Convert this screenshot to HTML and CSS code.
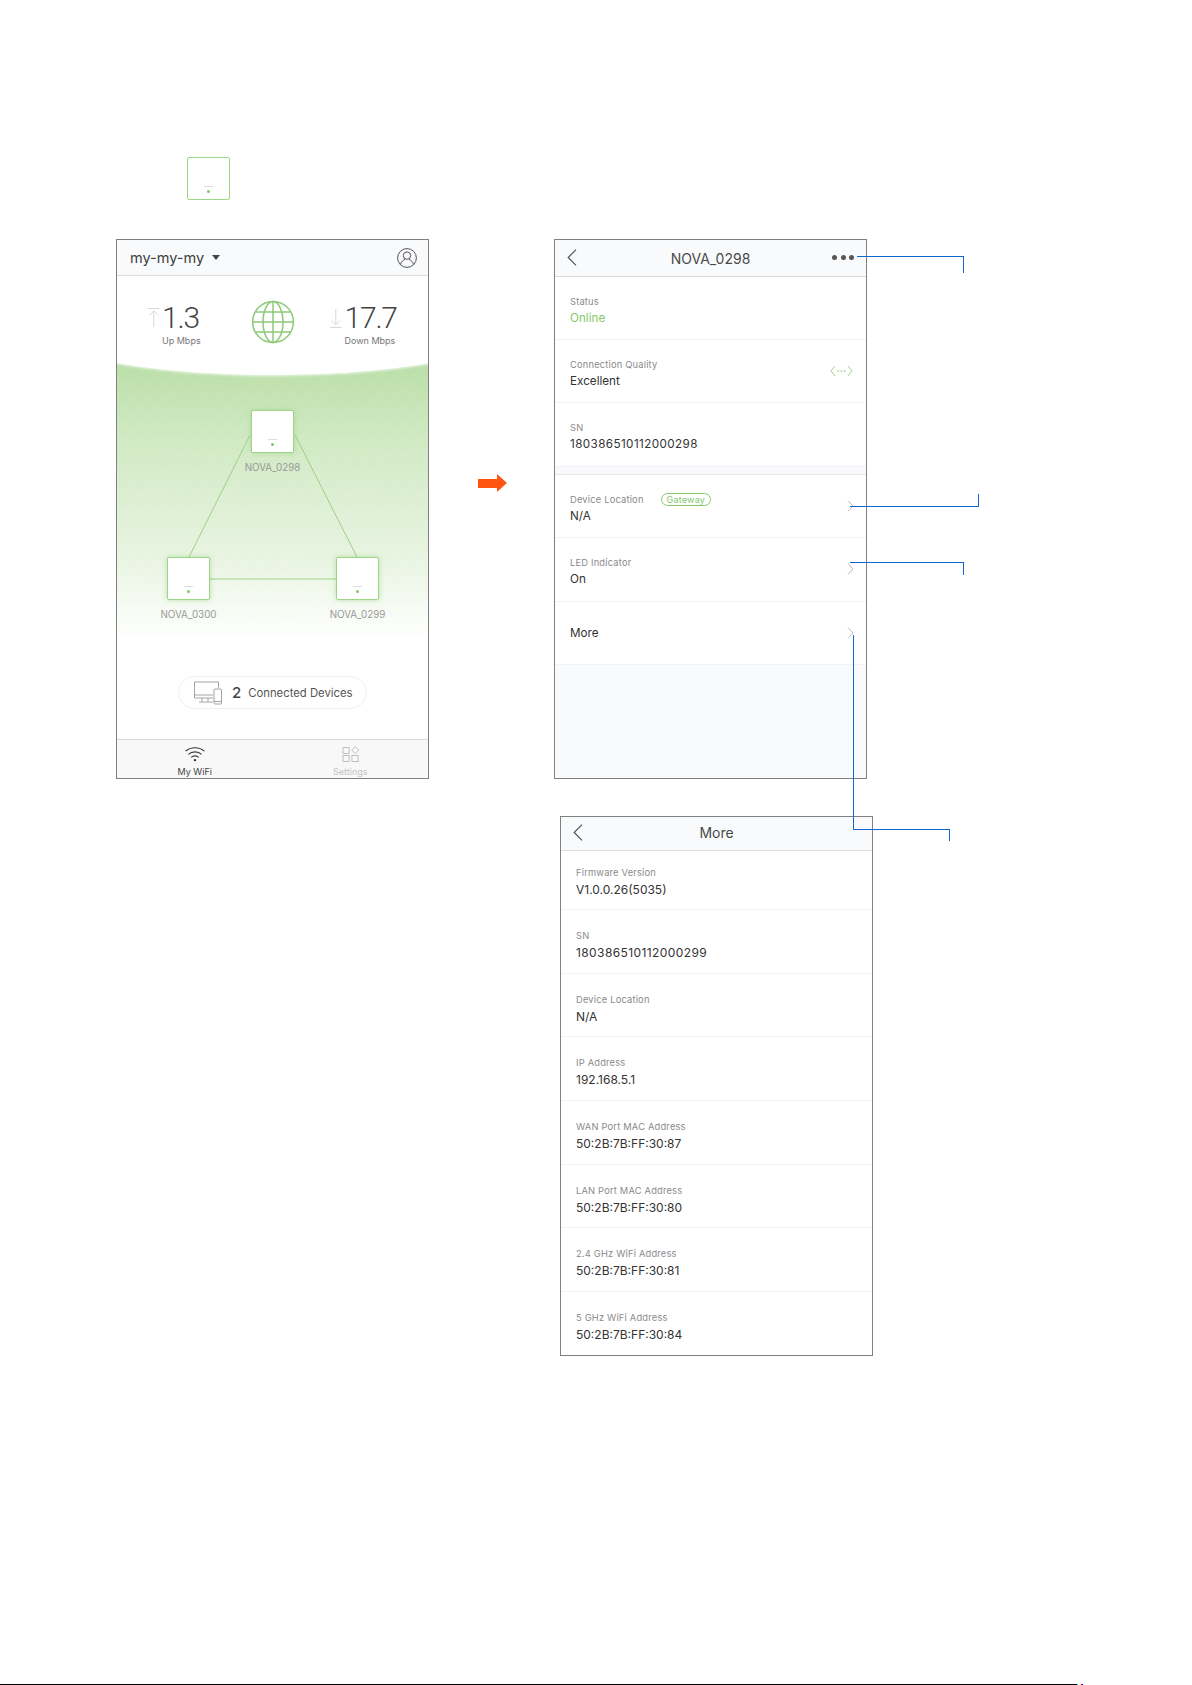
FILE: index.html
```html
<!doctype html>
<html>
<head>
  <meta charset="utf-8">
  <title>NOVA app</title>
  <link rel="stylesheet" href="styles.css">
</head>
<body>
<div class="page">

  <div class="node node-mark"><span class="node-logo"></span><span class="node-dot"></span></div>

  <div class="top-row">
    <!-- home screen -->
    <div class="phone home">
      <div class="bar home-bar">
        <span class="network">my-my-my</span>
        <span class="caret"></span>
        <svg class="user-icon" width="20" height="20" viewBox="0 0 20 20" fill="none" stroke="#444" stroke-width="0.9">
          <circle cx="10" cy="10" r="9.4"/>
          <circle cx="10" cy="7.6" r="3.7"/>
          <path d="M3.4 16.6c.7-3 3-4.6 4.6-5.2M16.6 16.6c-.7-3-3-4.6-4.6-5.2"/>
        </svg>
      </div>
      <div class="stats">
        <div class="stat stat-up">
          <svg class="stat-arrow" width="12" height="20" viewBox="0 0 12 20" fill="none" stroke="#d4d4d4" stroke-width="0.9">
            <path d="M0 .5h11.5M5.8 19V3M1.5 7.5l4.3-4.5 4.3 4.5"/>
          </svg>
          <div><div class="stat-num">1.3</div><div class="stat-unit">Up Mbps</div></div>
        </div>
        <svg class="globe" width="44" height="44" viewBox="0 0 44 44" fill="none" stroke="#8cca78" stroke-width="1.5">
          <circle cx="22" cy="22" r="20.4"/>
          <ellipse cx="22" cy="22" rx="10" ry="20.4"/>
          <path d="M22 1.6v40.8M1.6 22h40.8M4.6 12h34.8M4.6 32h34.8"/>
        </svg>
        <div class="stat stat-down">
          <svg class="stat-arrow" width="12" height="20" viewBox="0 0 12 20" fill="none" stroke="#d4d4d4" stroke-width="0.9">
            <path d="M0 19.5h11.5M5.8 1v16M1.5 12.5l4.3 4.5 4.3-4.5"/>
          </svg>
          <div><div class="stat-num">17.7</div><div class="stat-unit">Down Mbps</div></div>
        </div>
      </div>
      <div class="stage">
        <svg class="links" width="313" height="375" viewBox="0 0 313 375" fill="none" stroke="#9fcf85" stroke-width="1">
          <path d="M133 72L72 194M178 72L240 194M92 216H219"/>
        </svg>
        <div class="node node-top"><span class="node-logo"></span><span class="node-dot"></span><span class="node-name">NOVA_0298</span></div>
        <div class="node node-left"><span class="node-logo"></span><span class="node-dot"></span><span class="node-name">NOVA_0300</span></div>
        <div class="node node-right"><span class="node-logo"></span><span class="node-dot"></span><span class="node-name">NOVA_0299</span></div>
        <div class="pill">
          <svg width="30" height="24" viewBox="0 0 30 24" fill="none" stroke="#9a9a9a" stroke-width="0.9">
            <path d="M20 17H1.500V1H25.500V7M1.500 14H20M9 17v3.500M15 17v3.500M6 21h14"/>
            <rect x="21" y="8" width="7.500" height="15" rx="1"/>
            <path d="M21 20.500h7.500"/>
          </svg>
          <span class="pill-num">2</span>
          <span class="pill-text">Connected Devices</span>
        </div>
      </div>
      <div class="tabs">
        <div class="tab">
          <svg width="22" height="17" viewBox="0 0 22 17" fill="none" stroke="#333" stroke-width="1.100">
            <path d="M1 5.500c5.500-5 14.500-5 20 0M4 8.800c3.800-3.400 10.200-3.400 14 0M7 12c2.200-2 5.800-2 8 0"/>
            <circle cx="11" cy="15" r="1.300" fill="#333" stroke="none"/>
          </svg>
          <span>My WiFi</span>
        </div>
        <div class="tab tab-off">
          <svg width="18" height="17" viewBox="0 0 18 17" fill="none" stroke="#b5b5b5" stroke-width="0.9">
            <rect x="0.500" y="1.500" width="6.500" height="6.500"/>
            <rect x="0.500" y="10" width="6.500" height="6.500"/>
            <rect x="10" y="10" width="6.500" height="6.500"/>
            <path d="M13.500 .7l3.700 3.700-3.700 3.700-3.700-3.700z"/>
          </svg>
          <span>Settings</span>
        </div>
      </div>
    </div>

    <div class="go-arrow"></div>

    <!-- node details -->
    <div class="phone details">
      <div class="bar title-bar">
        <svg class="back" width="10" height="17" viewBox="0 0 10 17" fill="none" stroke="#555" stroke-width="1.200"><path d="M9 .7L1.200 8.500 9 16.300"/></svg>
        <span class="bar-title">NOVA_0298</span>
        <span class="dots"><i></i><i></i><i></i></span>
      </div>
      <div class="row row-first">
        <div class="row-text"><div class="label">Status</div><div class="value online">Online</div></div>
      </div>
      <div class="row">
        <div class="row-text"><div class="label">Connection Quality</div><div class="value">Excellent</div></div>
        <svg width="23" height="12" viewBox="0 0 23 12" fill="none" stroke="#a3d58d" stroke-width="1">
          <path d="M5 1L1 6l4 5M18 1l4 5-4 5"/>
          <path d="M7.500 6h8" stroke-dasharray="1.600 1.600" stroke-width="1.400"/>
        </svg>
      </div>
      <div class="row row-end">
        <div class="row-text"><div class="label">SN</div><div class="value serial">180386510112000298</div></div>
      </div>
      <div class="band"></div>
      <div class="row">
        <div class="row-text">
          <div class="label">Device Location<span class="tag">Gateway</span></div>
          <div class="value">N/A</div>
        </div>
        <svg class="chev" width="7" height="12" viewBox="0 0 7 12" fill="none" stroke="#bbb" stroke-width="1"><path d="M1 .7L6 6l-5 5.300"/></svg>
      </div>
      <div class="row">
        <div class="row-text"><div class="label">LED Indicator</div><div class="value">On</div></div>
        <svg class="chev" width="7" height="12" viewBox="0 0 7 12" fill="none" stroke="#bbb" stroke-width="1"><path d="M1 .7L6 6l-5 5.300"/></svg>
      </div>
      <div class="row">
        <div class="value">More</div>
        <svg class="chev" width="7" height="12" viewBox="0 0 7 12" fill="none" stroke="#bbb" stroke-width="1"><path d="M1 .7L6 6l-5 5.300"/></svg>
      </div>
    </div>
  </div>

  <!-- more info -->
  <div class="phone more">
    <div class="bar title-bar">
      <svg class="back" width="10" height="17" viewBox="0 0 10 17" fill="none" stroke="#555" stroke-width="1.200"><path d="M9 .7L1.200 8.500 9 16.300"/></svg>
      <span class="bar-title">More</span>
    </div>
    <div class="row row-first"><div class="row-text"><div class="label">Firmware Version</div><div class="value">V1.0.0.26(5035)</div></div></div>
    <div class="row"><div class="row-text"><div class="label">SN</div><div class="value serial">180386510112000299</div></div></div>
    <div class="row"><div class="row-text"><div class="label">Device Location</div><div class="value">N/A</div></div></div>
    <div class="row"><div class="row-text"><div class="label">IP Address</div><div class="value">192.168.5.1</div></div></div>
    <div class="row"><div class="row-text"><div class="label">WAN Port MAC Address</div><div class="value">50:2B:7B:FF:30:87</div></div></div>
    <div class="row"><div class="row-text"><div class="label">LAN Port MAC Address</div><div class="value">50:2B:7B:FF:30:80</div></div></div>
    <div class="row"><div class="row-text"><div class="label">2.4 GHz WiFi Address</div><div class="value">50:2B:7B:FF:30:81</div></div></div>
    <div class="row"><div class="row-text"><div class="label">5 GHz WiFi Address</div><div class="value">50:2B:7B:FF:30:84</div></div></div>
  </div>

  <div class="leader leader-menu"></div>
  <div class="leader leader-location"></div>
  <div class="leader leader-led"></div>
  <div class="leader leader-more-v"></div>
  <div class="leader leader-more"></div>

  <div class="footer-rule">
    <span class="rule"></span><span class="speck speck-c"></span><span class="speck speck-r"></span><span class="speck speck-b"></span>
  </div>

</div>
</body>
</html>
```

FILE: styles.css
```css
html, body {
  margin: 0;
  background: #fff;
}
.page {
  position: relative;
  width: 1192px;
  height: 1685px;
  overflow: hidden;
  display: flex;
  flex-direction: column;
  font-family: Inter, "Liberation Sans", sans-serif;
  color: #333;
}

/* the little router tile */
.node {
  box-sizing: border-box;
  width: 43px;
  height: 43px;
  background: #fff;
  border: 1px solid #9ed587;
  border-radius: 2px;
  display: flex;
  flex-direction: column;
  align-items: center;
  justify-content: flex-end;
  padding-bottom: 6px;
}
.node-logo {
  width: 9px;
  height: 1.500px;
  background: #dcdcdc;
  margin-bottom: 3px;
}
.node-dot {
  width: 3px;
  height: 3px;
  border-radius: 50%;
  background: #7fc868;
}
.node-mark {
  margin: 157px 0 0 187px;
}

.top-row {
  display: flex;
  align-items: flex-start;
  margin: 39px 0 0 116px;
}
.phone {
  box-sizing: border-box;
  width: 313px;
  height: 540px;
  border: 1px solid #808080;
  background: #fff;
  display: flex;
  flex-direction: column;
  overflow: hidden;
  flex: none;
}
.go-arrow {
  position: relative;
  width: 19px;
  height: 9px;
  margin: 240px 57px 0 49px;
  background: #ff5510;
}
.go-arrow::after {
  content: "";
  position: absolute;
  left: 19px;
  top: -5px;
  border-left: 10px solid #ff5510;
  border-top: 9.500px solid transparent;
  border-bottom: 9.500px solid transparent;
}

.bar {
  box-sizing: border-box;
  height: 36px;
  flex: none;
  background: #f9fafc;
  border-bottom: 1px solid #dcdcdc;
  display: flex;
  align-items: center;
  position: relative;
}
.home-bar {
  padding: 0 11px 0 13px;
}
.network {
  font-size: 14.500px;
  color: #3c3c3c;
}
.caret {
  margin-left: 8px;
  border-top: 5px solid #444;
  border-left: 4px solid transparent;
  border-right: 4px solid transparent;
}
.user-icon {
  margin-left: auto;
}

.stats {
  height: 87px;
  flex: none;
  display: grid;
  grid-template-columns: 1fr 44px 1fr;
  align-items: center;
}
.globe {
  margin-top: 5px;
}
.stat {
  display: flex;
  align-items: flex-start;
  padding-top: 10px;
}
.stat-up {
  padding-left: 31px;
}
.stat-down {
  padding-left: 35px;
}
.stat-arrow {
  margin: 6px 2px 0 0;
}
.stat-down .stat-arrow {
  margin-right: 3px;
}
.stat-num {
  font-family: Roboto, sans-serif;
  font-size: 30px;
  font-weight: 300;
  line-height: 32px;
  letter-spacing: -1.200px;
  color: #444;
}
.stat-unit {
  font-size: 9px;
  line-height: 13px;
  color: #777;
  white-space: nowrap;
}

.stage {
  position: relative;
  flex: 1;
  overflow: hidden;
  display: flex;
  justify-content: center;
  align-items: flex-end;
  padding-bottom: 30px;
  background:
    repeating-linear-gradient(135deg, rgba(255, 255, 255, .08) 0 1px, transparent 1px 3px),
    linear-gradient(#b9dea6 0, #cfe9c2 20%, #e8f4e1 52%, #fff 74%);
}
.stage::before {
  content: "";
  position: absolute;
  left: -104px;
  top: -108px;
  width: 520px;
  height: 120px;
  border-radius: 50%;
  background: #fff;
  box-shadow: 0 1px 3px rgba(255, 255, 255, .8);
}
.links {
  position: absolute;
  left: 0;
  top: 0;
}
.stage .node {
  position: absolute;
  box-shadow: 0 0 5px rgba(140, 205, 115, .55);
}
.node-top {
  left: 134px;
  top: 47px;
}
.node-left {
  left: 50px;
  top: 194px;
}
.node-right {
  left: 219px;
  top: 194px;
}
.node-name {
  position: absolute;
  top: 50px;
  left: -20px;
  width: 81px;
  text-align: center;
  font-size: 9.800px;
  line-height: 14px;
  color: #999;
}
.pill {
  position: relative;
  box-sizing: border-box;
  width: 189px;
  height: 33px;
  border: 1px solid #f0f0f0;
  border-radius: 17px;
  background: #fff;
  display: flex;
  align-items: center;
  padding-left: 14px;
}
.pill-num {
  margin-left: 9px;
  font-size: 15px;
  font-weight: 500;
  color: #444;
}
.pill-text {
  margin-left: 7px;
  font-size: 11.300px;
  color: #555;
}

.tabs {
  height: 39px;
  flex: none;
  box-sizing: border-box;
  background: #f8f8f8;
  border-top: 1px solid #dcdcdc;
  display: flex;
}
.tab {
  width: 50%;
  display: flex;
  flex-direction: column;
  align-items: center;
  padding-top: 6px;
  font-size: 9px;
  line-height: 12px;
  color: #444;
}
.tab-off {
  color: #c4c4c4;
}
.tab svg {
  margin-bottom: 4px;
}
.tab-off svg {
  margin-left: 2px;
}

/* detail screens */
.title-bar {
  justify-content: center;
}
.back {
  position: absolute;
  left: 12px;
  top: 9px;
}
.more .back {
  top: 7px;
}
.bar-title {
  font-size: 14px;
  color: #4a4a4a;
}
.more .bar-title {
  margin-bottom: 2px;
}
.dots {
  position: absolute;
  right: 12px;
  top: 15px;
  display: flex;
  gap: 3.500px;
}
.dots i {
  width: 5px;
  height: 5px;
  border-radius: 50%;
  background: #555;
}
.row {
  box-sizing: border-box;
  height: 63.500px;
  flex: none;
  display: flex;
  align-items: center;
  justify-content: space-between;
  padding: 0 13px 0 15px;
  border-bottom: 1px solid #f3f3f3;
}
.row-end {
  border-bottom: 1px solid #f0f2f5;
}
.row-text {
  padding-top: 4px;
}
.label {
  font-size: 9.300px;
  line-height: 16px;
  letter-spacing: .2px;
  color: #8a8a8a;
}
.value {
  font-size: 11.700px;
  line-height: 16px;
  color: #333;
}
.serial {
  letter-spacing: .4px;
}
.online {
  color: #86c96c;
}
.tag {
  display: inline-block;
  box-sizing: border-box;
  height: 13px;
  margin-left: 17px;
  padding: 0 5px;
  border: 1px solid #86c96c;
  border-radius: 7px;
  font-size: 9px;
  line-height: 11px;
  color: #86c96c;
  vertical-align: top;
  margin-top: 1px;
}
.chev {
  margin-right: -1px;
}
.band {
  height: 8px;
  flex: none;
  background: #f8f9fb;
  border-bottom: 1px solid #e8e8e8;
  box-sizing: border-box;
}
.details {
  background: #f9fafb;
}
.details .bar {
  height: 37px;
}
.details .row {
  background: #fff;
}
.details .row-first {
  height: 62.500px;
}
.more {
  margin: 37px 0 0 560px;
}
.more .bar {
  height: 34px;
}
.more .row {
  height: 63.700px;
  padding-top: 3px;
}
.more .row-first {
  height: 59px;
  padding-top: 0;
}
.more .value {
  font-size: 12px;
  line-height: 18px;
}

/* callout lines */
.leader {
  position: absolute;
  box-sizing: border-box;
  border: 0 solid #1266d4;
}
.leader-menu {
  left: 857px;
  top: 256px;
  width: 107px;
  height: 17px;
  border-width: 1px 1px 0 0;
}
.leader-location {
  left: 850px;
  top: 494px;
  width: 129px;
  height: 13px;
  border-width: 0 1.500px 1px 0;
}
.leader-led {
  left: 850px;
  top: 562px;
  width: 114px;
  height: 13px;
  border-width: 1.500px 1px 0 0;
}
.leader-more-v {
  left: 853px;
  top: 635px;
  width: 1px;
  height: 195px;
  background: #1266d4;
}
.leader-more {
  left: 853px;
  top: 829px;
  width: 97px;
  height: 12px;
  border-width: 1.500px 1px 0 0;
}

.footer-rule {
  margin-top: auto;
  display: flex;
  height: 1px;
}
.rule {
  width: 1077px;
  background: #000;
}
.speck {
  width: 1px;
  height: 1px;
}
.speck-c {
  background: #00e5e5;
}
.speck-r {
  margin-left: 3px;
  background: #e00000;
}
.speck-b {
  background: #0000e0;
}
```
